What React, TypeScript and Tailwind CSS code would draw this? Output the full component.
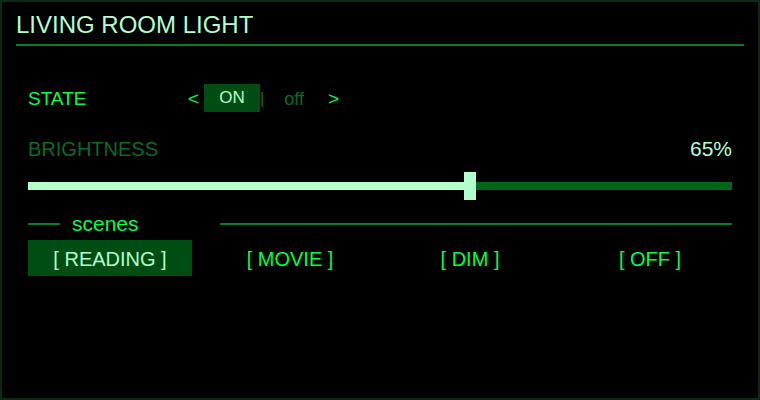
import { useState } from 'react'

const SCENES = ['READING', 'MOVIE', 'DIM', 'OFF']

export default function App() {
  const [on, setOn] = useState(true)
  const [scene, setScene] = useState('READING')
  const level = 65

  return (
    <div className="h-[400px] w-[760px] border-2 border-[#0b2914] bg-black px-[14px] pt-[8px] font-['Liberation_Sans',Arial,sans-serif]">
      <div className="border-b-2 border-[#0a7a26] pb-[4px]">
        <h1 className="text-[24px] leading-[30px] text-[#b3ffcc]">LIVING ROOM LIGHT</h1>
      </div>

      <div className="px-3">
        <div className="mt-[39px] flex h-[28px] items-center text-[19px]">
          <span className="w-[160px] text-[#00ff44]">STATE</span>
          <button className="text-[#00ff44]" onClick={() => setOn(!on)}>
            &lt;
          </button>
          <button
            className={`ml-[5px] -mt-[2px] h-[28px] w-[56px] text-[17px] ${on ? 'bg-[#004d14] text-[#b3ffcc]' : 'text-[#0d6b22]'}`}
            onClick={() => setOn(true)}
          >
            ON
          </button>
          <span className="w-[6px] text-[17px] text-[#0d6b22]">|</span>
          <button
            className={`h-[28px] w-[56px] text-[18px] ${!on ? 'bg-[#004d14] text-[#b3ffcc]' : 'text-[#0d6b22]'}`}
            onClick={() => setOn(false)}
          >
            off
          </button>
          <button className="ml-[6px] text-[#00ff44]" onClick={() => setOn(!on)}>
            &gt;
          </button>
        </div>

        <div className="mt-[22px] flex items-center justify-between text-[20px] leading-[28px]">
          <span className="text-[#0d6b22]">BRIGHTNESS</span>
          <span className="text-[21px] text-[#b3ffcc]">{level}%</span>
        </div>

        {/* track: filled part, thumb, remainder */}
        <div className="mt-[9px] flex h-[28px] items-center">
          <div className="h-[8px] w-[436px] bg-[#b3ffcc]" />
          <div className="h-[28px] w-[12px] bg-[#b3ffcc]" />
          <div className="h-[8px] flex-1 bg-[#006619]" />
        </div>

        <div className="mt-[12px] flex items-center">
          <div className="h-[2px] w-[32px] bg-[#0a7a26]" />
          <span className="w-[160px] pl-[12px] text-[21px] leading-[24px] text-[#00ff44]">scenes</span>
          <div className="h-[2px] flex-1 bg-[#0a7a26]" />
        </div>

        <div className="mt-[4px] grid grid-cols-4 gap-4">
          {SCENES.map((s) => (
            <button
              key={s}
              onClick={() => setScene(s)}
              className={`h-[36px] pt-[2px] text-[20px] ${scene === s ? 'bg-[#004d14] text-[#b3ffcc]' : 'text-[#00ff44]'}`}
            >
              [ {s} ]
            </button>
          ))}
        </div>
      </div>
    </div>
  )
}
